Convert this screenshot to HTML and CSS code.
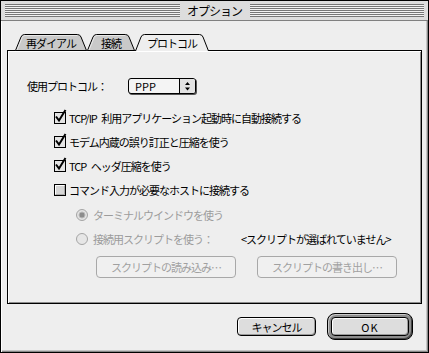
FILE: index.html
```html
<!DOCTYPE html>
<html lang="ja">
<head>
    <meta charset="UTF-8">
    <meta name="viewport" content="width=device-width, initial-scale=1.0">
    <title>オプション</title>
    <link rel="stylesheet" href="styles.css">
</head>
<body>
    <div class="opt_window">
        <div class="opt_titlebar">
            <div class="opt_stripes"></div>
            <div class="opt_title">オプション</div>
            <div class="opt_stripes"></div>
        </div>

        <div class="opt_body">
            <div class="opt_tabs">
                <div class="opt_tab opt_tab_redial">
                    <svg class="opt_tab_shape" width="72" height="17" viewBox="0 0 72 17">
                        <path d="M0.5 16.5 L6 3 Q7 0.5 9.5 0.5 H62.5 Q65 0.5 66 3 L71.5 16.5 Z" fill="#c9c9c9" stroke="#000"/>
                        <path d="M2 16 L7.2 3.5 Q8 1.5 10 1.5 H62" fill="none" stroke="#e8e8e8"/>
                    </svg>
                    <span class="opt_tab_label">再ダイアル</span>
                </div>
                <div class="opt_tab opt_tab_conn">
                    <svg class="opt_tab_shape" width="48" height="17" viewBox="0 0 48 17">
                        <path d="M0.5 16.5 L6 3 Q7 0.5 9.5 0.5 H38.5 Q41 0.5 42 3 L47.5 16.5 Z" fill="#c9c9c9" stroke="#000"/>
                        <path d="M2 16 L7.2 3.5 Q8 1.5 10 1.5 H38" fill="none" stroke="#e8e8e8"/>
                    </svg>
                    <span class="opt_tab_label">接続</span>
                </div>
                <div class="opt_tab opt_tab_proto">
                    <svg class="opt_tab_shape" width="74" height="17" viewBox="0 0 74 17">
                        <path d="M0.5 17 L6 3 Q7 0.5 9.5 0.5 H64.5 Q67 0.5 68 3 L73.5 17" fill="#eeeeee" stroke="#000"/>
                    </svg>
                    <span class="opt_tab_label">プロトコル</span>
                </div>
            </div>

            <div class="opt_panel">
                <div class="opt_proto_row">
                    <span class="opt_proto_label">使用プロトコル：</span>
                    <div class="opt_popup">
                        <span class="opt_popup_value">PPP</span>
                        <span class="opt_popup_arrow">
                            <svg width="5" height="9" viewBox="0 0 5 9">
                                <path d="M2.5 0 L5 3 H0 Z M0 5.5 H5 L2.5 8.5 Z" fill="#000"/>
                            </svg>
                        </span>
                    </div>
                </div>

                <div class="opt_checks">
                    <div class="opt_row">
                        <svg class="opt_box" width="12" height="12" viewBox="0 0 12 12">
                            <rect x="0.5" y="0.5" width="11" height="11" fill="#e4e4e4" stroke="#000"/>
                            <path d="M2 4.5 L5 8.5 L11.5 -2" fill="none" stroke="#000" stroke-width="2"/>
                        </svg>
                        <span>TCP/IP 利用アプリケーション起動時に自動接続する</span>
                    </div>
                    <div class="opt_row">
                        <svg class="opt_box" width="12" height="12" viewBox="0 0 12 12">
                            <rect x="0.5" y="0.5" width="11" height="11" fill="#e4e4e4" stroke="#000"/>
                            <path d="M2 4.5 L5 8.5 L11.5 -2" fill="none" stroke="#000" stroke-width="2"/>
                        </svg>
                        <span>モデム内蔵の誤り訂正と圧縮を使う</span>
                    </div>
                    <div class="opt_row">
                        <svg class="opt_box" width="12" height="12" viewBox="0 0 12 12">
                            <rect x="0.5" y="0.5" width="11" height="11" fill="#e4e4e4" stroke="#000"/>
                            <path d="M2 4.5 L5 8.5 L11.5 -2" fill="none" stroke="#000" stroke-width="2"/>
                        </svg>
                        <span>TCP ヘッダ圧縮を使う</span>
                    </div>
                    <div class="opt_row">
                        <svg class="opt_box" width="12" height="12" viewBox="0 0 12 12">
                            <rect x="0.5" y="0.5" width="11" height="11" fill="#d6d6d6" stroke="#000"/>
                            <path d="M1.5 10 V1.5 H10" fill="none" stroke="#fff"/>
                            <path d="M2 10.5 H10.5 V2" fill="none" stroke="#a8a8a8"/>
                        </svg>
                        <span>コマンド入力が必要なホストに接続する</span>
                    </div>

                    <div class="opt_radios">
                        <div class="opt_row opt_row_radio">
                            <svg width="12" height="12" viewBox="0 0 12 12">
                                <circle cx="6" cy="6" r="5.5" fill="#e2e2e2" stroke="#a4a4a4"/>
                                <circle cx="6" cy="6" r="3" fill="#8c8c8c" stroke="#b8b8b8"/>
                            </svg>
                            <span class="opt_disabled">ターミナルウインドウを使う</span>
                        </div>
                        <div class="opt_row opt_row_radio">
                            <svg width="12" height="12" viewBox="0 0 12 12">
                                <circle cx="6" cy="6" r="5.5" fill="#e6e6e6" stroke="#a4a4a4"/>
                            </svg>
                            <span class="opt_disabled opt_script_label">接続用スクリプトを使う：</span>
                            <span>&lt;スクリプトが選ばれていません&gt;</span>
                        </div>
                    </div>

                    <div class="opt_script_btns">
                        <button class="opt_btn_off" disabled>スクリプトの読み込み…</button>
                        <button class="opt_btn_off" disabled>スクリプトの書き出し…</button>
                    </div>
                </div>
            </div>

            <div class="opt_actions">
                <button class="opt_btn">キャンセル</button>
                <div class="opt_default">
                    <button class="opt_btn opt_btn_ok">OK</button>
                </div>
            </div>
        </div>
    </div>
</body>
</html>
```

FILE: styles.css
```css
* {
    margin: 0;
    padding: 0;
    box-sizing: border-box;
}

body {
    font-family: "Noto Sans CJK JP", "Noto Sans", sans-serif;
    font-size: 11px;
    letter-spacing: -1px;
    word-spacing: 3px;
    color: #000;
    background: #fff;
}

.opt_window {
    width: 429px;
    height: 353px;
    border: 1px solid #000;
    background: #eeeeee;
    display: flex;
    flex-direction: column;
    box-shadow: inset 1px 1px 0 #fff, inset -1px -1px 0 #888, inset -2px -2px 0 #c4c4c4;
}

.opt_titlebar {
    height: 20px;
    background: #dddddd;
    border-bottom: 1px solid #808080;
    display: flex;
    align-items: center;
    padding: 0 4px;
}

.opt_stripes {
    flex: 1;
    height: 13px;
    background: repeating-linear-gradient(to bottom, #767676 0 1px, #f2f2f2 1px 2px);
}

.opt_title {
    flex: 0 0 70px;
    text-align: center;
    font-size: 12px;
    line-height: 19px;
}

.opt_body {
    flex: 1;
    padding: 13px 6px 0;
}

.opt_tabs {
    display: flex;
    height: 17px;
    padding-left: 8px;
    margin-bottom: -1px;
    position: relative;
    z-index: 1;
}

.opt_tab {
    position: relative;
    height: 17px;
    display: flex;
    justify-content: center;
    padding-top: 2px;
}

.opt_tab_shape {
    position: absolute;
    left: 0;
    top: 0;
}

.opt_tab_label {
    position: relative;
    line-height: 14px;
}

.opt_tab_redial { width: 72px; }
.opt_tab_conn { width: 48px; }
.opt_tab_proto { width: 74px; }

.opt_panel {
    height: 254px;
    border: 1px solid #000;
    background: #eeeeee;
    padding: 25px 0 0 19px;
    box-shadow: inset 1px 1px 0 #fff, inset -1px -1px 0 #8c8c8c;
}

.opt_proto_row {
    display: flex;
    align-items: center;
    height: 20px;
}

.opt_proto_label {
    width: 101px;
}

.opt_popup {
    width: 68px;
    height: 16px;
    display: flex;
    border: 1px solid #000;
    border-radius: 3px;
    background: #f4f4f4;
    box-shadow: 1px 1px 0 #555;
}

.opt_popup_value {
    flex: 1;
    padding-left: 6px;
    line-height: 14px;
    letter-spacing: 0;
}

.opt_popup_arrow {
    width: 16px;
    border-left: 1px solid #000;
    background: #e2e2e2;
    border-radius: 0 2px 2px 0;
    display: flex;
    align-items: center;
    justify-content: center;
}

.opt_checks {
    margin-top: 10px;
    margin-left: 27px;
}

.opt_row {
    display: flex;
    align-items: center;
    height: 24px;
    gap: 3px;
}

.opt_box {
    overflow: visible;
    flex: none;
}

.opt_radios {
    margin-top: 1px;
    margin-left: 22px;
}

.opt_row_radio {
    gap: 5px;
}

.opt_disabled {
    color: #9c9c9c;
}

.opt_script_label {
    width: 143px;
}

.opt_script_btns {
    display: flex;
    gap: 21px;
    margin-top: 5px;
    margin-left: 42px;
}

.opt_btn_off {
    width: 140px;
    height: 22px;
    font: inherit;
    letter-spacing: inherit;
    color: #a0a0a0;
    background: #f0f0f0;
    border: 1px solid #a8a8a8;
    border-radius: 4px;
}

.opt_actions {
    display: flex;
    justify-content: flex-end;
    align-items: center;
    gap: 11px;
    margin-top: 9px;
    padding-right: 9px;
}

.opt_btn {
    width: 79px;
    height: 19px;
    font: inherit;
    letter-spacing: inherit;
    color: #000;
    background: #dddddd;
    border: 1px solid #000;
    border-radius: 4px;
    box-shadow: inset 1px 1px 0 #fff, inset -1px -1px 0 #9a9a9a;
}

.opt_default {
    width: 86px;
    height: 27px;
    border: 1px solid #000;
    border-radius: 8px;
    padding: 3px;
    background: #8e8e8e;
    box-shadow: inset 1px 1px 0 #c8c8c8, inset -1px -1px 0 #444;
}

.opt_btn_ok {
    width: 78px;
    display: block;
    letter-spacing: 1px;
}
```
